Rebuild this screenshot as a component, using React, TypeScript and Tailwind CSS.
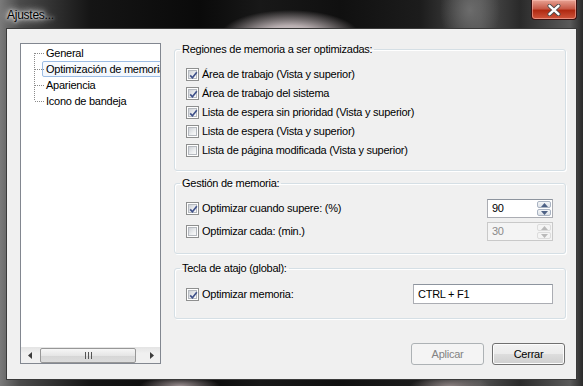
import React from "react";

const FONT = "font-['Liberation_Sans',Arial,sans-serif] tracking-[-0.25px]";

function Check({ checked }: { checked: boolean }) {
  return (
    <div className="w-[13px] h-[13px] shrink-0 border border-[#8e8f8f] bg-white p-[1px]">
      <div className="w-full h-full border border-[#b5b9bf] bg-[linear-gradient(135deg,#cfd2d7_0%,#eceef0_60%,#fafafa_100%)] relative">
        {checked && (
          <svg width="9" height="9" viewBox="0 0 9 9" className="absolute left-0 top-0">
            <path d="M1.2 4.4 L3.4 6.8 L7.8 1.2" fill="none" stroke="#40528a" strokeWidth="1.7" strokeLinejoin="miter" />
          </svg>
        )}
      </div>
    </div>
  );
}

function CheckRow({ checked, label }: { checked: boolean; label: string }) {
  return (
    <div className="h-[19px] flex items-center">
      <Check checked={checked} />
      <span className="ml-[3px] text-[11px] leading-[15px] text-black whitespace-nowrap">{label}</span>
    </div>
  );
}

function Spin({ value, disabled }: { value: string; disabled?: boolean }) {
  const arrow = disabled ? "#b9b9b9" : "#4d6185";
  return (
    <div
      className={`w-[66px] h-[19px] flex border ${
        disabled ? "border-[#c9c9c9] bg-[#f4f4f4]" : "border-[#abadb3] border-t-[#8d949e] bg-white"
      }`}
    >
      <div className={`flex-1 pl-[4px] text-[11px] leading-[17px] ${disabled ? "text-[#8a8a8a]" : "text-black"}`}>{value}</div>
      <div className="w-[16px] flex flex-col p-[1px] gap-[1px]">
        <div
          className={`flex-1 flex items-center justify-center rounded-[2px] border ${
            disabled ? "border-[#dcdcdc] bg-[#f4f4f4]" : "border-[#a9b3c2] bg-[linear-gradient(#f4f6f8,#dde2e8)]"
          }`}
        >
          <svg width="7" height="4" viewBox="0 0 7 4">
            <path d="M0 4 L3.5 0 L7 4 Z" fill={arrow} />
          </svg>
        </div>
        <div
          className={`flex-1 flex items-center justify-center rounded-[2px] border ${
            disabled ? "border-[#dcdcdc] bg-[#f4f4f4]" : "border-[#a9b3c2] bg-[linear-gradient(#f4f6f8,#dde2e8)]"
          }`}
        >
          <svg width="7" height="4" viewBox="0 0 7 4">
            <path d="M0 0 L3.5 4 L7 0 Z" fill={arrow} />
          </svg>
        </div>
      </div>
    </div>
  );
}

function Group({ title, className, children }: { title: string; className?: string; children: React.ReactNode }) {
  return (
    <fieldset
      className={`border border-[#d5dfe5] rounded-[3px] pl-[11px] pr-[12px] shadow-[inset_1px_1px_0_#ffffff,1px_1px_0_#ffffff] ${className ?? ""}`}
    >
      <legend className="-ml-[6px] px-[2px] text-[11px] leading-[15px] text-black">{title}</legend>
      {children}
    </fieldset>
  );
}

function WinButton({ label, disabled }: { label: string; disabled?: boolean }) {
  return (
    <div
      className={`w-[73px] h-[22px] rounded-[3px] border flex items-center justify-center text-[11px] leading-[15px] ${
        disabled
          ? "border-[#adb2b5] bg-[#f4f4f4] text-[#838383]"
          : "border-[#707070] bg-[linear-gradient(#f2f2f2_0%,#ebebeb_50%,#dddddd_51%,#cfcfcf_100%)] text-black shadow-[inset_0_0_0_1px_#fcfcfc]"
      }`}
    >
      {label}
    </div>
  );
}

function TreeView() {
  const items = ["General", "Optimización de memoria", "Apariencia", "Icono de bandeja"];
  return (
    <div className="w-[141px] h-[321px] mt-[1px] border border-[#828790] bg-white flex flex-col">
      <div className="relative pt-[1px] overflow-hidden">
        <svg width="30" height="70" className="absolute left-0 top-0" shapeRendering="crispEdges">
          <line x1="13.5" y1="9" x2="13.5" y2="57" stroke="#8a8a8a" strokeDasharray="1 1" />
          {[9, 25, 41, 57].map((y) => (
            <line key={y} x1="14" y1={y + 0.5} x2="23" y2={y + 0.5} stroke="#8a8a8a" strokeDasharray="1 1" />
          ))}
        </svg>
        {items.map((t, i) => (
          <div key={t} className="h-[16px] flex items-center pl-[21px]">
            <div
              className={`h-[16px] pl-[3px] pr-[3px] flex items-center whitespace-nowrap text-[11px] leading-[15px] text-black ${
                i === 1 ? "border border-[#9dbde4] rounded-[2px] bg-[linear-gradient(#fafcfe,#f1f6fd)] min-w-[140px]" : "border border-transparent"
              }`}
            >
              {t}
            </div>
          </div>
        ))}
      </div>
      <div className="flex-1" />
      <div className="h-[16px] flex items-center bg-[linear-gradient(#e4e4e4,#f0f0f0_40%,#f0f0f0)]">
        <div className="w-[17px] h-full flex items-center justify-center">
          <svg width="4" height="7" viewBox="0 0 4 7">
            <path d="M4 0 L0 3.5 L4 7 Z" fill="#3c3c3c" />
          </svg>
        </div>
        <div className="ml-[2px] w-[96px] h-[15px] rounded-[2px] border border-[#979797] bg-[linear-gradient(#f6f6f6,#e6e6e6_50%,#d6d6d6_51%,#dcdcdc)] flex items-center justify-center">
          <svg width="7" height="7" viewBox="0 0 7 7" shapeRendering="crispEdges">
            <rect x="0" y="0" width="1" height="7" fill="#555" />
            <rect x="3" y="0" width="1" height="7" fill="#555" />
            <rect x="6" y="0" width="1" height="7" fill="#555" />
          </svg>
        </div>
        <div className="flex-1" />
        <div className="w-[17px] h-full flex items-center justify-center">
          <svg width="4" height="7" viewBox="0 0 4 7">
            <path d="M0 0 L4 3.5 L0 7 Z" fill="#3c3c3c" />
          </svg>
        </div>
      </div>
    </div>
  );
}

export default function App() {
  return (
    <div
      className={`${FONT} w-[583px] h-[386px] flex flex-col overflow-hidden bg-[radial-gradient(ellipse_70px_26px_at_290px_36px,#e8e0e0_0%,#b8aeb0_40%,transparent_100%),radial-gradient(ellipse_30px_40px_at_470px_10px,#6c6c6c_0%,transparent_100%),radial-gradient(ellipse_40px_10px_at_180px_386px,#9a8e90_0%,transparent_100%),radial-gradient(ellipse_40px_10px_at_450px_386px,#8a8080_0%,transparent_100%),linear-gradient(90deg,#7a7a7a_0px,#4a4a4a_20px,#151515_90px,#0a0a0a_200px,#181818_260px,#101010_340px,#1c1c1c_420px,#505050_480px,#2a2a2a_520px,#5a5a5a_570px,#2a2a2a_583px)]`}
    >
      {/* Title bar */}
      <div className="h-[28px] flex items-start">
        <div className="pl-[7px] pt-[8px] text-[12px] leading-[15px] text-black [text-shadow:0_0_6px_#ffffff,0_0_10px_#ffffff,0_0_3px_#ffffff]">
          Ajustes...
        </div>
        <div className="flex-1" />
        <div className="mr-[6px] w-[46px] h-[20px] rounded-b-[4px] border border-t-0 border-[#3a1010] bg-[linear-gradient(#e8a394_0%,#c75a48_45%,#b02a12_55%,#d0553c_100%)] shadow-[inset_0_0_0_1px_rgba(255,200,190,0.5)] flex items-center justify-center">
          <svg width="14" height="12" viewBox="0 0 14 12">
            <path
              d="M2.5 1.8 L11.5 10.2 M11.5 1.8 L2.5 10.2"
              fill="none"
              stroke="#4a4a4a"
              strokeWidth="4"
              strokeLinecap="round"
            />
            <path
              d="M2.5 1.8 L11.5 10.2 M11.5 1.8 L2.5 10.2"
              fill="none"
              stroke="#ffffff"
              strokeWidth="2.4"
              strokeLinecap="round"
            />
          </svg>
        </div>
      </div>

      {/* Client area */}
      <div className="mx-[6px] h-[352px] border border-[#3a3a3a] bg-[#f0f0f0] flex pl-[13px] pt-[13px] pr-[10px] pb-[14px]">
        <TreeView />
        <div className="ml-[13px] flex-1 flex flex-col">
          <Group title="Regiones de memoria a ser optimizadas:" className="pt-[8px] pb-[10px]">
            <CheckRow checked label="Área de trabajo (Vista y superior)" />
            <CheckRow checked label="Área de trabajo del sistema" />
            <CheckRow checked label="Lista de espera sin prioridad (Vista y superior)" />
            <CheckRow checked={false} label="Lista de espera (Vista y superior)" />
            <CheckRow checked={false} label="Lista de página modificada (Vista y superior)" />
          </Group>
          <Group title="Gestión de memoria:" className="mt-[5px] pt-[8px] pb-[12px]">
            <div className="flex flex-col gap-[4px]">
              <div className="h-[19px] flex items-center">
                <Check checked />
                <span className="ml-[3px] text-[11px] leading-[15px] text-black">Optimizar cuando supere: (%)</span>
                <div className="flex-1" />
                <Spin value="90" />
              </div>
              <div className="h-[19px] flex items-center">
                <Check checked={false} />
                <span className="ml-[3px] text-[11px] leading-[15px] text-black">Optimizar cada: (min.)</span>
                <div className="flex-1" />
                <Spin value="30" disabled />
              </div>
            </div>
          </Group>
          <Group title="Tecla de atajo (global):" className="mt-[7px] pt-[8px] pb-[14px]">
            <div className="h-[20px] flex items-center">
              <Check checked />
              <span className="ml-[3px] text-[11px] leading-[15px] text-black">Optimizar memoria:</span>
              <div className="flex-1" />
              <div className="w-[140px] h-[20px] border border-[#abadb3] border-t-[#8d949e] bg-white pl-[4px] text-[11px] leading-[18px] text-black">
                CTRL + F1
              </div>
            </div>
          </Group>
          <div className="flex-1" />
          <div className="flex justify-end gap-[8px] pr-[1px]">
            <WinButton label="Aplicar" disabled />
            <WinButton label="Cerrar" />
          </div>
        </div>
      </div>
    </div>
  );
}
